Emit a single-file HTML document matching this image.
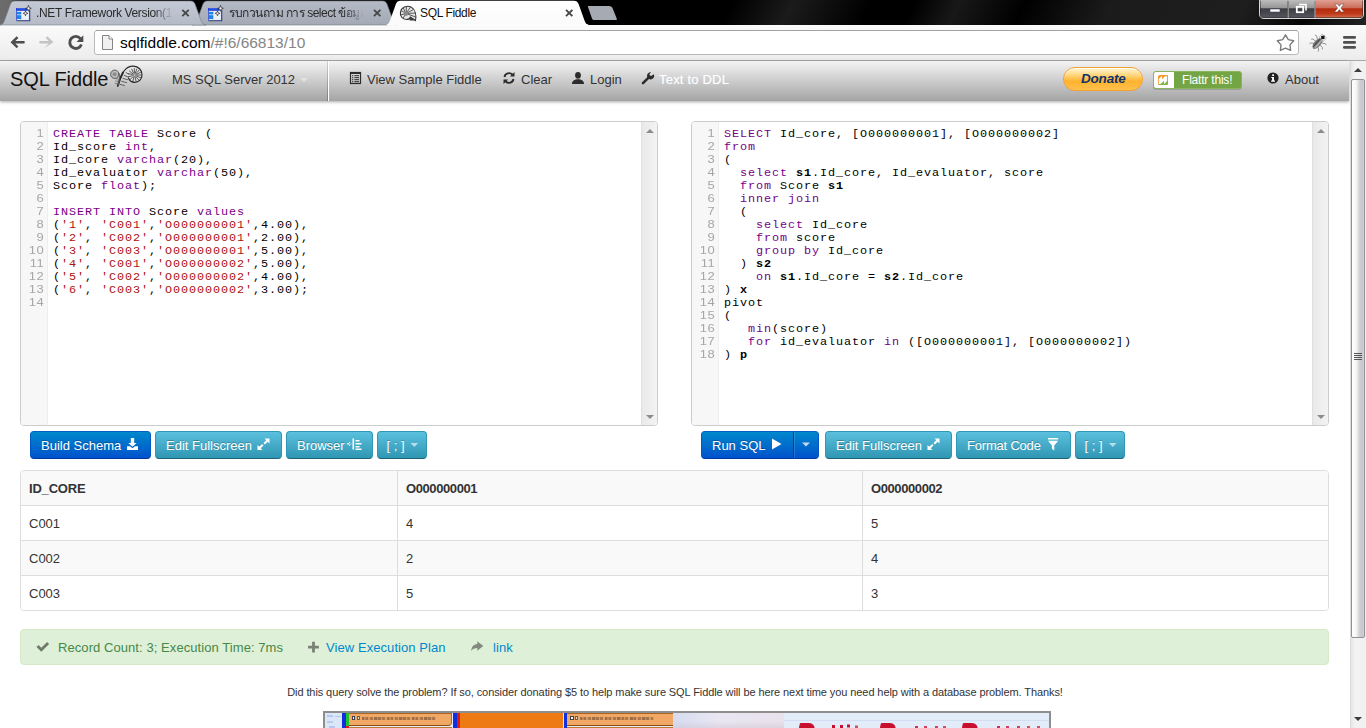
<!DOCTYPE html>
<html>
<head>
<meta charset="utf-8">
<title>SQL Fiddle</title>
<style>
*{box-sizing:border-box;margin:0;padding:0}
html,body{width:1366px;height:728px;overflow:hidden;background:#fff;font-family:"Liberation Sans",sans-serif;}
#root{position:absolute;left:0;top:0;width:1366px;height:728px;overflow:hidden;background:#fff}
.abs{position:absolute}
/* ---------- browser chrome ---------- */
#frame{left:0;top:0;width:1366px;height:25px;background:linear-gradient(115deg,rgba(0,0,0,0) 0,rgba(0,0,0,0) 665px,rgba(60,60,60,.45) 720px,rgba(0,0,0,0) 790px,rgba(0,0,0,0) 830px,rgba(60,60,60,.4) 870px,rgba(0,0,0,0) 930px,rgba(55,55,55,.5) 1010px,rgba(60,60,60,.5) 1130px,rgba(20,20,20,.3) 1190px,rgba(60,60,60,.6) 1250px,rgba(55,55,55,.6) 1366px),linear-gradient(90deg,#6c6c6c 0px,#6a6a6a 10px,#3a3a3a 16px,#111 40px,#000 120px,#000 100%)}
#toolbar{left:0;top:25px;width:1366px;height:36px;background:linear-gradient(#fbfbfb,#ececec);border-bottom:1px solid #a9a9a9}
#omni{left:95px;top:30px;width:1208px;height:25px;background:#fff;border:1px solid #b4b4b4;border-radius:3px}
.tabtxt{font-size:12px;color:#222;white-space:nowrap;top:6px;line-height:14px;letter-spacing:-0.35px}
/* ---------- navbar ---------- */
#nav{left:0;top:61px;width:1349px;height:40px;background:linear-gradient(#f4f4f4,#a4a4a4);box-shadow:0 1px 3px rgba(0,0,0,.35)}
.navtxt{font-size:13px;color:#333;white-space:nowrap;top:72px;line-height:16px}
/* ---------- editors ---------- */
.ed{top:121px;width:638px;height:305px;border:1px solid #ccc;border-radius:4px;background:#fff;overflow:hidden}
.gut{left:0;top:0;width:27px;height:303px;background:#f7f7f7;border-right:1px solid #eee}
.ln{position:absolute;left:0;width:23px;text-align:right;font-size:11px;line-height:13px;color:#a6a6a6;letter-spacing:0.3px;transform:scaleX(1.18);transform-origin:100% 50%;font-family:"Liberation Sans",sans-serif}
.code{position:absolute;left:32px;top:5.500px;font-family:"Liberation Mono",monospace;font-size:11.800px;line-height:13px;letter-spacing:0.920px;color:#000;white-space:pre}
.k{color:#708}.s{color:#a11}.n{color:#000}
.vsb{top:0;width:16px;height:303px;background:linear-gradient(90deg,#e9e9e9,#f3f3f3);border-left:1px solid #e0e0e0}
/* ---------- buttons ---------- */
.btn{top:431px;height:28px;border-radius:4px;color:#fff;font-size:13px;line-height:27px;white-space:nowrap;text-shadow:0 -1px 0 rgba(0,0,0,.25);border:1px solid;padding-left:10px}
.bp{background:linear-gradient(#0088cc,#0052cc);border-color:#0062c4 #0058c0 #003a9c}
.bi{background:linear-gradient(#5bc0de,#2f96b4);border-color:#2f96b4 #2f96b4 #1f6377}
/* ---------- table ---------- */
#tbl{left:20px;top:470px;width:1309px;height:141px;border:1px solid #ddd;border-radius:4px;overflow:hidden;background:#fff}
.row{left:0;width:1307px;height:35px;border-top:1px solid #ddd}
.cell{position:absolute;top:0;height:35px;font-size:13px;color:#333;line-height:36px;padding-left:8px;border-left:1px solid #ddd}
/* ---------- alert ---------- */
#alert{left:20px;top:629px;width:1309px;height:36px;background:#dff0d8;border:1px solid #d6e9c6;border-radius:4px}
.at{font-size:13px;color:#468847;top:640px;letter-spacing:0.07px;line-height:16px;white-space:nowrap}
</style>
</head>
<body>
<div id="root">

<!-- ======= browser frame ======= -->
<div id="frame" class="abs"></div>
<div id="toolbar" class="abs"></div>
<svg class="abs" style="left:0;top:0" width="1366" height="61" viewBox="0 0 1366 61">
  <defs>
    <linearGradient id="gTabI" x1="0" y1="0" x2="0" y2="1"><stop offset="0" stop-color="#b4bbc7"/><stop offset="1" stop-color="#a3aab6"/></linearGradient>
    <linearGradient id="gTabI1" x1="0" y1="0" x2="0" y2="1"><stop offset="0" stop-color="#c3cad6"/><stop offset="1" stop-color="#b4bbc7"/></linearGradient>
    <linearGradient id="gTabA" x1="0" y1="0" x2="0" y2="1"><stop offset="0" stop-color="#ffffff"/><stop offset="1" stop-color="#fafafa"/></linearGradient>
    <linearGradient id="gMin" x1="0" y1="0" x2="0" y2="1"><stop offset="0" stop-color="#bdbdbd"/><stop offset="0.45" stop-color="#969696"/><stop offset="0.5" stop-color="#3c3c42"/><stop offset="1" stop-color="#55565e"/></linearGradient>
    <linearGradient id="gCls" x1="0" y1="0" x2="0" y2="1"><stop offset="0" stop-color="#e0a092"/><stop offset="0.45" stop-color="#cb6e5a"/><stop offset="0.5" stop-color="#b52a0e"/><stop offset="0.8" stop-color="#c03c1c"/><stop offset="1" stop-color="#d26a4a"/></linearGradient>
  </defs>
  <!-- tab 2 (behind) -->
  <path d="M192,25 C195,25 196,23 197,20.5 L203,4 C204,2 205,1 207.5,1 L382.5,1 C385,1 386,2 387,4 L393,20.5 C394,23 395,25 398,25 Z" fill="url(#gTabI)" stroke="#70757e" stroke-width="0.6"/>
  <!-- tab 1 -->
  <path d="M-0.5,25 C2.5,25 3.5,23 4.5,20.5 L10.5,4 C11.5,2 12.5,1 15.0,1 L190.5,1 C193,1 194,2 195,4 L201,20.5 C202,23 203,25 206,25 Z" fill="url(#gTabI1)" stroke="#777c86" stroke-width="0.6"/>
  <!-- new tab button -->
  <path d="M588,7 C587.500,6 588,6 589,6 L609,6 C611,6 612,7 612.500,8 L616.500,18 C617,19.500 617,20 616,20 L595,20 C593,20 592.500,19.500 592,18.500 Z" fill="#a6abb3"/>
  <!-- active tab -->
  <path d="M385,25 C388,25 389,23 390,20.5 L396,3.8 C397,1.8 398,0.8 400.5,0.8 L574.0,0.8 C576.5,0.8 577.5,1.8 578.5,3.8 L584.5,20.5 C585.5,23 586.5,25 589.5,25 Z" fill="url(#gTabA)"/>
  <rect x="387" y="24.300" width="201" height="1.500" fill="#fdfdfd"/>
  <!-- tab close x -->
  <g stroke="#484848" stroke-width="1.9" stroke-linecap="butt">
    <path d="M182.300,9.800 l6.400,6.400 m0,-6.400 l-6.400,6.400"/>
    <path d="M374,9.800 l6.400,6.400 m0,-6.400 l-6.400,6.400"/>
    <path d="M566,9.800 l6.400,6.400 m0,-6.400 l-6.400,6.400"/>
  </g>
  <!-- window controls -->
  <g>
    <path d="M1259.500,0 L1259.500,14 Q1259.500,18.500 1264,18.500 L1359,18.500 Q1363.500,18.500 1363.500,14 L1363.500,0 Z" fill="#222" stroke="#d8d8d8" stroke-width="1"/>
    <rect x="1260.500" y="0" width="27" height="17.500" fill="url(#gMin)"/>
    <rect x="1289" y="0" width="25.500" height="17.500" fill="url(#gMin)"/>
    <path d="M1315.500,0 L1315.500,17.500 L1359,17.500 Q1362.500,17.500 1362.500,14 L1362.500,0 Z" fill="url(#gCls)"/>
    <path d="M1288.200,0 V18 M1315,0 V18" stroke="#e0e0e0" stroke-width="0.8"/>
    <rect x="1270" y="9" width="10" height="3" fill="#fff" stroke="#444a5c" stroke-width="0.6"/>
    <path d="M1299,4.500 h7 v6" fill="none" stroke="#fff" stroke-width="1.6"/>
    <rect x="1296.800" y="6.800" width="6.400" height="5.400" fill="none" stroke="#fff" stroke-width="1.800"/>
    <path d="M1334.500,4 l3,0 l1.800,2.300 l1.800,-2.300 l3,0 l-3.200,4 l3.300,4 l-3.100,0 l-1.800,-2.400 l-1.800,2.400 l-3.100,0 l3.300,-4 Z" fill="#fff" stroke="#5a3030" stroke-width="0.5"/>
  </g>
  <!-- omnibox -->
  <rect x="94.500" y="30.500" width="1204" height="24" rx="2.500" fill="#fff" stroke="#b8b8b8"/>
  <path d="M96,30.500 H1297" stroke="#a2a2a2" stroke-width="1"/>
  <!-- nav arrows -->
  <path d="M10.500,42.300 l6.200,-6 l1.700,1.700 l-3,3 l9.200,0 l0,2.600 l-9.200,0 l3,3 l-1.700,1.700 Z" fill="#4e4e4e"/>
  <path d="M53.500,42.300 l-6.200,-6 l-1.700,1.700 l3,3 l-9.200,0 l0,2.600 l9.200,0 l-3,3 l-1.700,1.700 Z" fill="#c4c4c4"/>
  <path d="M80.400,38.600 A6,6 0 1 0 81.400,44.500" fill="none" stroke="#4e4e4e" stroke-width="2.900"/>
  <path d="M83.300,35.200 l0,6.800 l-6.800,0 Z" fill="#4e4e4e"/>
  <!-- page icon -->
  <path d="M102.500,35.500 h6.500 l3.500,3.500 v10.500 h-10 Z" fill="#f1f1f1" stroke="#858585" stroke-width="1"/>
  <path d="M109,35.500 v3.500 h3.500" fill="#fff" stroke="#858585" stroke-width="1"/>
  <!-- star -->
  <path d="M1285.5,34.8 L1288.3,39.6 L1293.7,40.7 L1290.0,44.9 L1290.6,50.4 L1285.5,48.1 L1280.4,50.4 L1281.0,44.9 L1277.3,40.7 L1282.7,39.6 Z" fill="#fff" stroke="#7c7c7c" stroke-width="1.400" stroke-linejoin="round"/>
  <!-- firebug-ish icon -->
  <g transform="translate(1318.800,42) rotate(42)">
    <path d="M-2.600,-1 l-3.300,-2.200 l-1.600,0.600 M-2.800,1.500 l-3.600,0.200 l-1.200,1.400 M-2.500,4.200 l-3,2 l-0.300,1.600 M2.600,-1 l3.300,-2.200 l1.600,0.600 M2.800,1.500 l3.600,0.200 l1.200,1.400 M2.500,4.200 l3,2 l0.300,1.600" stroke="#8e8e8e" stroke-width="0.900" fill="none"/>
    <ellipse cx="0" cy="1.800" rx="3.400" ry="6.800" fill="#7e7e7e"/>
    <ellipse cx="-1" cy="1.800" rx="0.700" ry="5.600" fill="#4a4a4a"/>
    <ellipse cx="1" cy="1.800" rx="0.700" ry="5.600" fill="#b4b4b4"/>
    <rect x="-3" y="-8.200" width="6" height="4.400" fill="#f2f2f2" stroke="#9a9a9a" stroke-width="0.500"/>
    <path d="M0,-8.600 L2.300,-6 L0,-3.600 L-2.300,-6 Z" fill="#161616"/>
  </g>
  <!-- hamburger -->
  <g fill="#505050"><rect x="1343" y="36" width="13" height="2.800" rx="1.300"/><rect x="1343" y="40.900" width="13" height="2.800" rx="1.300"/><rect x="1343" y="46" width="13" height="2.800" rx="1.300"/></g>
  <!-- favicons: two blue window icons -->
  <g id="fav1">
    <rect x="16.500" y="8.500" width="13" height="12" fill="#d9dfec"/>
    <rect x="22" y="11" width="6.500" height="8.500" fill="#eef1f8"/>
    <path d="M29.700,10 V20.700 H16.500" fill="none" stroke="#2c3f7c" stroke-width="1.100"/>
    <path d="M16.500,20.500 V8.500" fill="none" stroke="#3a5ad8" stroke-width="0.900"/>
    <rect x="16" y="8" width="11.500" height="2.800" fill="#1c3ed2"/>
    <rect x="16.800" y="8.500" width="9" height="0.700" fill="#5a80ee"/>
    <rect x="17" y="12" width="4.200" height="2.400" fill="#1c86e8"/><rect x="17" y="15.200" width="4.200" height="3.800" fill="#1c86e8"/>
    <path d="M28.500,5.300 l0.700,2.300 l2.100,0.700 l-2.100,0.700 l-0.700,2.300 l-0.700,-2.300 l-2.100,-0.700 l2.100,-0.700 Z" fill="#fff" stroke="#111" stroke-width="0.600"/>
    <path d="M25.500,10.800 l0.600,1.900 l1.800,0.600 l-1.800,0.600 l-0.600,1.900 l-0.600,-1.900 l-1.800,-0.600 l1.800,-0.600 Z" fill="#fff" stroke="#111" stroke-width="0.600"/>
  </g>
  <use href="#fav1" x="192" y="0"/>
  <!-- nautilus favicon -->
  <g transform="translate(408,13.500)">
    <path d="M7.500,7 C8.500,2 7.500,-4 3,-6.500 C-1.500,-8.500 -6.500,-6 -7.500,-1.500 C-8.300,2.500 -5.500,6 -1.500,6 C0.500,6 2,5 2.500,3.500 L7.500,7 Z" fill="#e6e6e6" stroke="#3a3a3a" stroke-width="1.100"/>
    <path d="M-2,0 L-7,-3 M-2,0 L-5,-6 M-2,0 L-1.500,-7.500 M-2,0 L2.500,-6.500 M-2,0 L5.500,-4 M-2,0 L7.500,-0.500 M-2,0 L7.800,3.500 M-2,0 L-7.500,1.500 M-2,0 L-5,4.800" stroke="#4a4a4a" stroke-width="0.900" fill="none"/>
    <circle cx="-2" cy="0" r="2.400" fill="#8a8a8a"/>
    <path d="M2,3.500 L7.500,7 L1.500,7 Z" fill="#3a3a3a"/>
  </g>
</svg>
<div class="abs tabtxt" style="left:36px;width:137px;overflow:hidden;color:#2a2a2a;-webkit-mask-image:linear-gradient(90deg,#000 118px,transparent 137px);mask-image:linear-gradient(90deg,#000 118px,transparent 137px)">.NET Framework Version(1</div>
<div class="abs tabtxt" style="left:229px;width:136px;overflow:hidden;color:#2a2a2a;letter-spacing:-0.5px;-webkit-mask-image:linear-gradient(90deg,#000 116px,transparent 135px);mask-image:linear-gradient(90deg,#000 116px,transparent 135px)">รบกวนถาม การ select ข้อมูล</div>
<div class="abs tabtxt" style="left:420px;color:#111">SQL Fiddle</div>
<div class="abs" id="url" style="left:120px;top:33.500px;font-size:15.5px;line-height:18px;color:#000;white-space:nowrap">sqlfiddle.com<span style="color:#858585">/#!6/66813/10</span></div>

<!-- ======= navbar ======= -->
<div id="nav" class="abs"></div>
<div class="abs" style="left:10px;top:68px;font-size:20px;line-height:23px;color:#111;white-space:nowrap;letter-spacing:-0.1px">SQL Fiddle</div>
<svg class="abs" style="left:108px;top:63px" width="38" height="28" viewBox="108 63 38 28">
  <!-- fern logo -->
  <g fill="none" stroke-linecap="round">
    <circle cx="134.400" cy="74.400" r="7.300" fill="#e4e4e4" fill-opacity="0.750" stroke="none"/>
    <path d="M132.4,74.6 L128.1,73.5 M132.8,73.8 L129.4,71.0 M133.6,73.2 L131.7,69.2 M134.4,73.0 L134.3,68.6 M135.3,73.1 L136.8,69.0 M136.0,73.6 L138.9,70.3 M136.5,74.3 L140.5,72.4 M136.7,75.1 L141.1,75.0 M136.5,76.0 L140.6,77.7 M136.0,76.8 L138.9,80.1 M135.1,77.3 L136.2,81.6 M133.9,77.3 L132.8,81.6 M132.9,76.8 L129.8,79.9 M132.4,75.8 L128.1,76.9" stroke="#4a4a4a" stroke-width="0.900"/>
    <circle cx="134.500" cy="75.200" r="2" fill="#8c8c8c" stroke="none"/>
    <circle cx="134.500" cy="75" r="0.600" fill="#f4f4f4" stroke="none"/>
    <path d="M117.800,85.800 C119.500,80 121.500,75 124,71 C126.500,67.500 130,66 133.500,66.100 C138.500,66.300 142,70 142,74.800 C142,79.500 138.500,82.300 134.800,82.300 C131.500,82.300 129.300,80.500 128.600,78" stroke="#2a2a2a" stroke-width="1.200"/>
    <path d="M117.800,85.800 C119.300,80.500 121,76 123,72.500" stroke="#2a2a2a" stroke-width="1.900"/>
    <path d="M120,84.400 L124.500,85.500 M121.600,81.300 L126.700,82.600 M123,78.400 L127.800,79.700 M124.300,75.400 L128.500,77 M126,72.500 L129,74.500" stroke="#555" stroke-width="0.900"/>
    <circle cx="114.800" cy="74.300" r="4.200" fill="#b4b4b4" fill-opacity="0.800" stroke="#5c5c5c" stroke-width="1"/>
    <circle cx="114.600" cy="74.300" r="2" fill="#8e8e8e" stroke="none"/>
    <path d="M119,73.500 C119.800,77 119.500,81 118.200,85" stroke="#5c5c5c" stroke-width="1"/>
    <path d="M115.100,83.400 L118,84 M115.600,81 L118.500,81.600 M116.200,78.700 L118.900,79.200" stroke="#666" stroke-width="0.800"/>
  </g>
</svg>
<div class="abs navtxt" style="left:172px">MS SQL Server 2012</div>
<div class="abs" style="left:300px;top:78px;width:0;height:0;border-left:4px solid transparent;border-right:4px solid transparent;border-top:4px solid #e2e2e2"></div>
<div class="abs" style="left:327px;top:61px;width:1px;height:40px;background:linear-gradient(#d0d0d0,#7c7c7c)"></div>
<div class="abs" style="left:328px;top:61px;width:1px;height:40px;background:#fff"></div>
<svg class="abs" style="left:340px;top:68px" width="330" height="20" viewBox="340 68 330 20">
  <!-- list icon -->
  <g>
    <rect x="350.500" y="72.500" width="10" height="11" fill="none" stroke="#2c2c2c" stroke-width="1.200"/><rect x="350" y="72" width="11" height="2" fill="#2c2c2c"/>
    <path d="M352,75.700 h1.300 M354.300,75.700 h4.700 M352,77.700 h1.300 M354.300,77.700 h4.700 M352,79.700 h1.300 M354.300,79.700 h4.700 M352,81.700 h1.300 M354.300,81.700 h4.700" stroke="#2c2c2c" stroke-width="1"/>
  </g>
  <!-- refresh icon -->
  <g fill="none" stroke="#2c2c2c" stroke-width="1.900">
    <path d="M504.500,77 A4.600,4.600 0 0 1 512.300,74.500"/>
    <path d="M513.500,79 A4.600,4.600 0 0 1 505.700,81.500"/>
  </g>
  <path d="M514.500,72 v4.600 h-4.600 Z" fill="#2c2c2c"/>
  <path d="M503.500,84 v-4.600 h4.600 Z" fill="#2c2c2c"/>
  <!-- user icon -->
  <g fill="#2c2c2c">
    <ellipse cx="578" cy="75.300" rx="2.900" ry="3.400"/>
    <path d="M572,84 C572,81 574,80.200 576.500,79.300 L579.500,79.300 C582,80.200 584,81 584,84 Z"/>
  </g>
  <!-- wrench icon -->
  <g>
    <path d="M643,83.200 L649.600,76.600" stroke="#2c2c2c" stroke-width="2.600" stroke-linecap="round"/>
    <path d="M653.800,74.200 A3.600,3.600 0 1 1 651,72.300 L649.200,74.600 L650.800,76.300 Z" fill="#2c2c2c"/>
  </g>
</svg>
<div class="abs navtxt" style="left:367px">View Sample Fiddle</div>
<div class="abs navtxt" style="left:521px">Clear</div>
<div class="abs navtxt" style="left:590px">Login</div>
<div class="abs navtxt" style="left:659px;color:#fff;letter-spacing:0.2px;text-shadow:0 0 1px rgba(255,255,255,.4)">Text to DDL</div>
<!-- donate -->
<div class="abs" style="left:1063px;top:67px;width:80px;height:24px;border-radius:12px;border:1px solid #f3a032;background:linear-gradient(#fff6d9 0%,#ffd983 30%,#ffb32e 60%,#ffc04d 100%);box-shadow:inset 0 1px 0 rgba(255,255,255,.8)"></div>
<div class="abs" style="left:1081px;top:71px;font-size:13.500px;line-height:16px;font-weight:bold;font-style:italic;color:#10336b;white-space:nowrap;letter-spacing:-0.2px">Donate</div>
<!-- flattr -->
<div class="abs" style="left:1153px;top:71px;width:89px;height:18px;border-radius:3px;background:#74a544;border:1px solid #8ab65b;box-shadow:0 1px 0 rgba(0,0,0,.15)"></div>
<div class="abs" style="left:1154px;top:72px;width:20px;height:16px;border-radius:2px 0 0 2px;background:#fff"></div>
<svg class="abs" style="left:1158px;top:74.500px" width="11" height="11" viewBox="0 0 11 11"><rect x="0" y="0" width="10" height="10" rx="1.800" fill="#f39a2a"/><path d="M10,0 L10,8.200 Q10,10 8.200,10 L0,10 Z" fill="#7db53c"/><path d="M0.800,9.200 L0.800,4 L4,0.800 L4,4.200 L7,1.200 L9.200,1.200 L9.200,6 L6,9.200 L6,5.800 L3,8.800 Z" fill="#fff"/><path d="M2.300,7.800 L2.300,4.500 L5,7 L7.700,2.500 L7.700,5.500 L5,3.200 Z" fill="#f39a2a" opacity="0"/></svg>
<div class="abs" style="left:1182px;top:72.500px;font-size:12px;line-height:15px;color:#fff;white-space:nowrap;letter-spacing:-0.2px">Flattr this!</div>
<!-- about -->
<svg class="abs" style="left:1266px;top:71px" width="14" height="14" viewBox="0 0 14 14"><circle cx="7" cy="7" r="5.600" fill="#222"/><rect x="6.200" y="3.300" width="1.800" height="1.700" fill="#fff"/><path d="M5.300,6 h2.700 v3.600 h1 v1.100 h-3.900 v-1.100 h1 v-2.500 h-0.800 Z" fill="#fff"/></svg>
<div class="abs navtxt" style="left:1285px">About</div>

<!-- ======= editors ======= -->
<div id="edL" class="abs ed" style="left:20px">
<div class="abs gut"></div>
<div class="ln" style="top:5px">1</div>
<div class="ln" style="top:18px">2</div>
<div class="ln" style="top:31px">3</div>
<div class="ln" style="top:44px">4</div>
<div class="ln" style="top:57px">5</div>
<div class="ln" style="top:70px">6</div>
<div class="ln" style="top:83px">7</div>
<div class="ln" style="top:96px">8</div>
<div class="ln" style="top:109px">9</div>
<div class="ln" style="top:122px">10</div>
<div class="ln" style="top:135px">11</div>
<div class="ln" style="top:148px">12</div>
<div class="ln" style="top:161px">13</div>
<div class="ln" style="top:174px">14</div>
<div class="code"><span class="k">CREATE</span> <span class="k">TABLE</span> Score (
Id_score <span class="k">int</span>,
Id_core <span class="k">varchar</span>(<span class="n">20</span>),
Id_evaluator <span class="k">varchar</span>(<span class="n">50</span>),
Score <span class="k">float</span>);

<span class="k">INSERT</span> <span class="k">INTO</span> Score <span class="k">values</span>
(<span class="s">'1'</span>, <span class="s">'C001'</span>,<span class="s">'O000000001'</span>,<span class="n">4.00</span>),
(<span class="s">'2'</span>, <span class="s">'C002'</span>,<span class="s">'O000000001'</span>,<span class="n">2.00</span>),
(<span class="s">'3'</span>, <span class="s">'C003'</span>,<span class="s">'O000000001'</span>,<span class="n">5.00</span>),
(<span class="s">'4'</span>, <span class="s">'C001'</span>,<span class="s">'O000000002'</span>,<span class="n">5.00</span>),
(<span class="s">'5'</span>, <span class="s">'C002'</span>,<span class="s">'O000000002'</span>,<span class="n">4.00</span>),
(<span class="s">'6'</span>, <span class="s">'C003'</span>,<span class="s">'O000000002'</span>,<span class="n">3.00</span>);
</div>
<div class="abs vsb" style="left:620px"></div>
<div class="abs" style="left:624.500px;top:7px;width:0;height:0;border-left:4px solid transparent;border-right:4px solid transparent;border-bottom:4px solid #8c8c8c"></div>
<div class="abs" style="left:624.500px;top:293px;width:0;height:0;border-left:4px solid transparent;border-right:4px solid transparent;border-top:4px solid #8c8c8c"></div>
</div>
<div id="edR" class="abs ed" style="left:691px">
<div class="abs gut"></div>
<div class="ln" style="top:5px">1</div>
<div class="ln" style="top:18px">2</div>
<div class="ln" style="top:31px">3</div>
<div class="ln" style="top:44px">4</div>
<div class="ln" style="top:57px">5</div>
<div class="ln" style="top:70px">6</div>
<div class="ln" style="top:83px">7</div>
<div class="ln" style="top:96px">8</div>
<div class="ln" style="top:109px">9</div>
<div class="ln" style="top:122px">10</div>
<div class="ln" style="top:135px">11</div>
<div class="ln" style="top:148px">12</div>
<div class="ln" style="top:161px">13</div>
<div class="ln" style="top:174px">14</div>
<div class="ln" style="top:187px">15</div>
<div class="ln" style="top:200px">16</div>
<div class="ln" style="top:213px">17</div>
<div class="ln" style="top:226px">18</div>
<div class="code"><span class="k">SELECT</span> Id_core, [O000000001], [O000000002]
<span class="k">from</span>
(
  <span class="k">select</span> <b>s1</b>.Id_core, Id_evaluator, score
  <span class="k">from</span> Score <b>s1</b>
  <span class="k">inner</span> <span class="k">join</span>
  (
    <span class="k">select</span> Id_core
    <span class="k">from</span> score
    <span class="k">group</span> <span class="k">by</span> Id_core
  ) <b>s2</b>
    <span class="k">on</span> <b>s1</b>.Id_core = <b>s2</b>.Id_core
) <b>x</b>
pivot
(
   <span class="k">min</span>(score)
   <span class="k">for</span> id_evaluator <span class="k">in</span> ([O000000001], [O000000002])
) <b>p</b></div>
<div class="abs vsb" style="left:620px"></div>
<div class="abs" style="left:624.500px;top:7px;width:0;height:0;border-left:4px solid transparent;border-right:4px solid transparent;border-bottom:4px solid #8c8c8c"></div>
<div class="abs" style="left:624.500px;top:293px;width:0;height:0;border-left:4px solid transparent;border-right:4px solid transparent;border-top:4px solid #8c8c8c"></div>
</div>

<!-- ======= buttons ======= -->
<div class="abs btn bp" style="left:30px;width:121px">Build Schema</div>
<div class="abs btn bi" style="left:155px;width:127px">Edit Fullscreen</div>
<div class="abs btn bi" style="left:286px;width:87px">Browser</div>
<div class="abs btn bi" style="left:377px;width:50px;padding-left:8.500px">[ ; ]</div>
<div class="abs btn bp" style="left:701px;width:93px;border-radius:4px 0 0 4px">Run SQL</div>
<div class="abs btn bp" style="left:793px;width:26px;border-radius:0 4px 4px 0;border-left:1px solid #003bb3;box-shadow:inset 1px 0 0 rgba(255,255,255,.15)"></div>
<div class="abs btn bi" style="left:825px;width:127px">Edit Fullscreen</div>
<div class="abs btn bi" style="left:956px;width:115px;letter-spacing:-0.2px">Format Code</div>
<div class="abs btn bi" style="left:1075px;width:50px;padding-left:8.500px">[ ; ]</div>
<svg class="abs" style="left:0;top:430px" width="1366" height="28" viewBox="0 431 1366 28">
  <g fill="#fff">
    <!-- download icon -->
    <path d="M130.800,439 h3.400 v5 h2.500 l-4.200,3.700 l-4.200,-3.700 h2.500 Z"/>
    <path d="M127,447.200 h3 l2.500,2.100 l2.500,-2.100 h3 v3.800 h-11 Z"/>
    <!-- fullscreen icons -->
    <g id="fs"><path d="M269.500,439.500 v5 l-1.800,-1.800 l-2.800,2.800 l-1.400,-1.400 l2.800,-2.800 l-1.800,-1.800 Z"/><path d="M257.500,451 v-5 l1.800,1.800 l2.800,-2.800 l1.400,1.400 l-2.800,2.800 l1.800,1.800 Z"/></g>
    <use href="#fs" x="670" y="0"/>
    <!-- browser (indent) icon -->
    <path d="M352.500,439.500 h1.600 v11 h-1.600 Z M355.500,441 h4 v1.600 h-4 Z M355.500,444 h6 v1.600 h-6 Z M355.500,447 h4 v1.600 h-4 Z M355.500,449.500 h6 v1.400 h-6 Z M347,444.300 h4.500 v1.200 h-4.500 Z M349,442.500 l0,4.800 l2.500,-2.400 Z"/>
    <!-- carets -->
    <path d="M410.500,444 h7.600 l-3.800,4 Z" opacity="0.6"/>
    <path d="M1109,444 h7.600 l-3.800,4 Z" opacity="0.6"/>
    <path d="M802,443.500 h8 l-4,4 Z" opacity="0.75"/>
    <!-- play -->
    <path d="M772,439.500 l9.500,5.500 l-9.500,5.500 Z"/>
    <!-- filter -->
    <path d="M1048,439 h10.200 v1.500 h-10.200 Z M1048,441.800 h10.200 l-3.900,4.600 v5.200 l-2.400,-1.800 v-3.400 Z"/>
  </g>
</svg>

<!-- ======= table ======= -->
<div id="tbl" class="abs">
<div class="abs row" style="top:0px;background:#f9f9f9;border-top:0;"><div class="cell" style="left:0px;width:376px;border-left:0;font-weight:bold;letter-spacing:-0.2px">ID_CORE</div><div class="cell" style="left:376px;width:465px;font-weight:bold;letter-spacing:-0.4px">O000000001</div><div class="cell" style="left:841px;width:466px;font-weight:bold;letter-spacing:-0.4px">O000000002</div></div>
<div class="abs row" style="top:34px;background:#fff;"><div class="cell" style="left:0px;width:376px;border-left:0;">C001</div><div class="cell" style="left:376px;width:465px;">4</div><div class="cell" style="left:841px;width:466px;">5</div></div>
<div class="abs row" style="top:69px;background:#f9f9f9;"><div class="cell" style="left:0px;width:376px;border-left:0;">C002</div><div class="cell" style="left:376px;width:465px;">2</div><div class="cell" style="left:841px;width:466px;">4</div></div>
<div class="abs row" style="top:104px;background:#fff;"><div class="cell" style="left:0px;width:376px;border-left:0;">C003</div><div class="cell" style="left:376px;width:465px;">5</div><div class="cell" style="left:841px;width:466px;">3</div></div>
</div>

<!-- ======= alert ======= -->
<div id="alert" class="abs"></div>
<svg class="abs" style="left:30px;top:638px" width="470" height="18" viewBox="30 638 470 18">
  <path d="M36.500,647 l2,-2 l2.800,2.800 l5.800,-5.800 l2,2 l-7.800,7.800 Z" fill="#6f7a6a"/>
  <path d="M312.100,641.700 h2.800 v4 h4 v2.800 h-4 v4 h-2.800 v-4 h-4 v-2.800 h4 Z" fill="#7a8076"/>
  <path d="M477.300,641.300 l6,4.700 l-6,4.700 v-2.800 c-2.700,0 -4.600,0.700 -6.100,3 c0.300,-4.100 2.400,-6.500 6.100,-6.900 Z" fill="#848a80"/>
</svg>
<div class="abs at" style="left:58px">Record Count: 3; Execution Time: 7ms</div>
<div class="abs at" style="left:326px;color:#0088cc">View Execution Plan</div>
<div class="abs at" style="left:493px;color:#0088cc">link</div>

<!-- ======= footer ======= -->
<div class="abs" style="left:287px;top:685px;width:776px;text-align:center;font-size:11px;line-height:14px;color:#333;white-space:nowrap;letter-spacing:-0.09px">Did this query solve the problem? If so, consider donating $5 to help make sure SQL Fiddle will be here next time you need help with a database problem. Thanks!</div>
<div class="abs" id="ad" style="left:323px;top:711px;width:728px;height:20px;border:2px solid #8e8e8e;border-bottom:0;background:#e3ecf9;overflow:hidden">
  <div class="abs" style="left:0;top:0;width:17px;height:20px;background:#dbe7f8"></div>
  <div class="abs" style="left:2px;top:2px;width:6px;height:2px;background:#b2c8ec;box-shadow:0 6px 0 #b8ccee, 2px 11px 0 #b2c8ec"></div>
  <div class="abs" style="left:10px;top:3px;width:6px;height:1px;background:#b4c8ea"></div>
  <div class="abs" style="left:17px;top:0;width:3.500px;height:20px;background:#1030e0"></div>
  <div class="abs" style="left:20.500px;top:0;width:3.500px;height:13px;background:#20c030"></div>
  <div class="abs" style="left:20.500px;top:13px;width:3.500px;height:7px;background:#e01818"></div>
  <div class="abs" style="left:24px;top:0;width:102.500px;height:12.500px;background:#f1a865;border-bottom:1.500px solid #8a4a12;border-right:1px solid #b06820;border-top:1px solid #a86420;border-radius:0 0 4px 0"></div>
  <div class="abs" style="left:24px;top:13.500px;width:102.500px;height:11px;background:#f1a865;border-top:1px solid #c07830;border-right:1px solid #b06820"></div>
  <div class="abs" style="left:128px;top:0;width:3.500px;height:20px;background:#1030e0"></div>
  <div class="abs" style="left:131.500px;top:0;width:3px;height:20px;background:#e01818"></div>
  <div class="abs" style="left:134.500px;top:0;width:103.500px;height:20px;background:#ee7a14"></div>
  <div class="abs" style="left:238.500px;top:0;width:3.500px;height:20px;background:#1030e0"></div>
  <div class="abs" style="left:242px;top:0;width:106px;height:12.500px;background:#f1a865;border-bottom:1.500px solid #8a4a12;border-top:1px solid #a86420"></div>
  <div class="abs" style="left:242px;top:13.500px;width:106px;height:11px;background:#f1a865;border-top:1px solid #c07830"></div>
  <div class="abs" style="left:348px;top:0;width:111px;height:20px;background:linear-gradient(90deg,#d5dcf0,#e9e6f2 40%,#e8e2ec)"></div>
  <div class="abs" style="left:348px;top:8px;width:111px;height:12px;background:linear-gradient(rgba(205,192,205,0),rgba(205,192,205,.75))"></div>
  <div class="abs" style="left:459px;top:7px;width:267px;height:1px;background:#d3def2"></div>
  <div class="abs" style="left:26.500px;top:2.500px;width:3.500px;height:4.500px;background:#f4f6fa;border:1px solid #3a4050"></div>
  <div class="abs" style="left:31.500px;top:2.500px;width:3px;height:4.500px;background:#e8dcc0;border:1px solid #6a6050"></div>
  <div class="abs" style="left:245px;top:2.500px;width:3.500px;height:4.500px;background:#f4f6fa;border:1px solid #3a4050"></div>
  <div class="abs" style="left:250px;top:2.500px;width:3px;height:4.500px;background:#e8dcc0;border:1px solid #6a6050"></div>
  <div class="abs" style="left:37px;top:3.500px;width:74px;height:3px;background:repeating-linear-gradient(90deg,rgba(90,60,40,.55) 0 2.500px,rgba(90,60,40,.3) 2.500px 4px,rgba(90,60,40,.5) 4px 6.500px,rgba(90,60,40,.15) 6.500px 8px,rgba(90,60,40,.45) 8px 11px,rgba(90,60,40,.1) 11px 12.500px)"></div>
  <div class="abs" style="left:255px;top:3.500px;width:74px;height:3px;background:repeating-linear-gradient(90deg,rgba(90,60,40,.55) 0 2.500px,rgba(90,60,40,.3) 2.500px 4px,rgba(90,60,40,.5) 4px 6.500px,rgba(90,60,40,.15) 6.500px 8px,rgba(90,60,40,.45) 8px 11px,rgba(90,60,40,.1) 11px 12.500px)"></div>
  <div class="abs" style="left:37px;top:16px;width:70px;height:2px;background:rgba(90,60,40,.35)"></div>
  <div class="abs" style="left:255px;top:16px;width:70px;height:2px;background:rgba(90,60,40,.35)"></div>
  <div class="abs" style="left:474px;top:10px;width:16px;height:9px;background:#c8102e;border-radius:1px 7px 0 0;transform:skewX(-12deg)"></div>
  <div class="abs" style="left:555px;top:10px;width:16px;height:9px;background:#c8102e;border-radius:1px 7px 0 0;transform:skewX(-12deg)"></div>
  <div class="abs" style="left:637px;top:10px;width:16px;height:9px;background:#c8102e;border-radius:1px 7px 0 0;transform:skewX(-12deg)"></div>
  <div class="abs" style="left:507px;top:12px;width:2.500px;height:3px;background:#c8102e;box-shadow:8px 0 0 #c8102e,15px -0.500px 0 #c8102e,23px 0.500px 0 #d05068"></div>
  <div class="abs" style="left:590px;top:12.500px;width:2.500px;height:3px;background:#d03050;box-shadow:9px 0 0 #d04060,20px 0 0 #d04060,28px 0 0 #d05068"></div>
  <div class="abs" style="left:672px;top:12.500px;width:2.500px;height:3px;background:#d03050;box-shadow:9px 0 0 #d04060,20px 0 0 #d04060,30px 0 0 #d05068,40px 0 0 #d05068"></div>
</div>

<!-- ======= page scrollbar ======= -->
<div class="abs" style="left:1350px;top:61px;width:16px;height:667px;background:linear-gradient(90deg,#e6e6e6,#f3f3f3 30%,#f0f0f0);border-left:1px solid #dcdcdc"></div>
<div class="abs" style="left:1350.500px;top:79px;width:14.500px;height:559px;border:1px solid #8f8f96;border-radius:2px;background:linear-gradient(90deg,#ffffff 0%,#f6f6f7 35%,#d2d2d7 60%,#c6c6cc 85%,#d6d6da 100%)"></div>
<div class="abs" style="left:1353.500px;top:68px;width:0;height:0;border-left:4.500px solid transparent;border-right:4.500px solid transparent;border-bottom:4.500px solid #3c3c3c"></div>
<div class="abs" style="left:1353.500px;top:717px;width:0;height:0;border-left:4.500px solid transparent;border-right:4.500px solid transparent;border-top:4.500px solid #3c3c3c"></div>
<div class="abs" style="left:1354px;top:353px;width:8px;height:1px;background:#555;box-shadow:0 2px 0 #555,0 4px 0 #555,0 6px 0 #555"></div>

</div>
</body>
</html>
